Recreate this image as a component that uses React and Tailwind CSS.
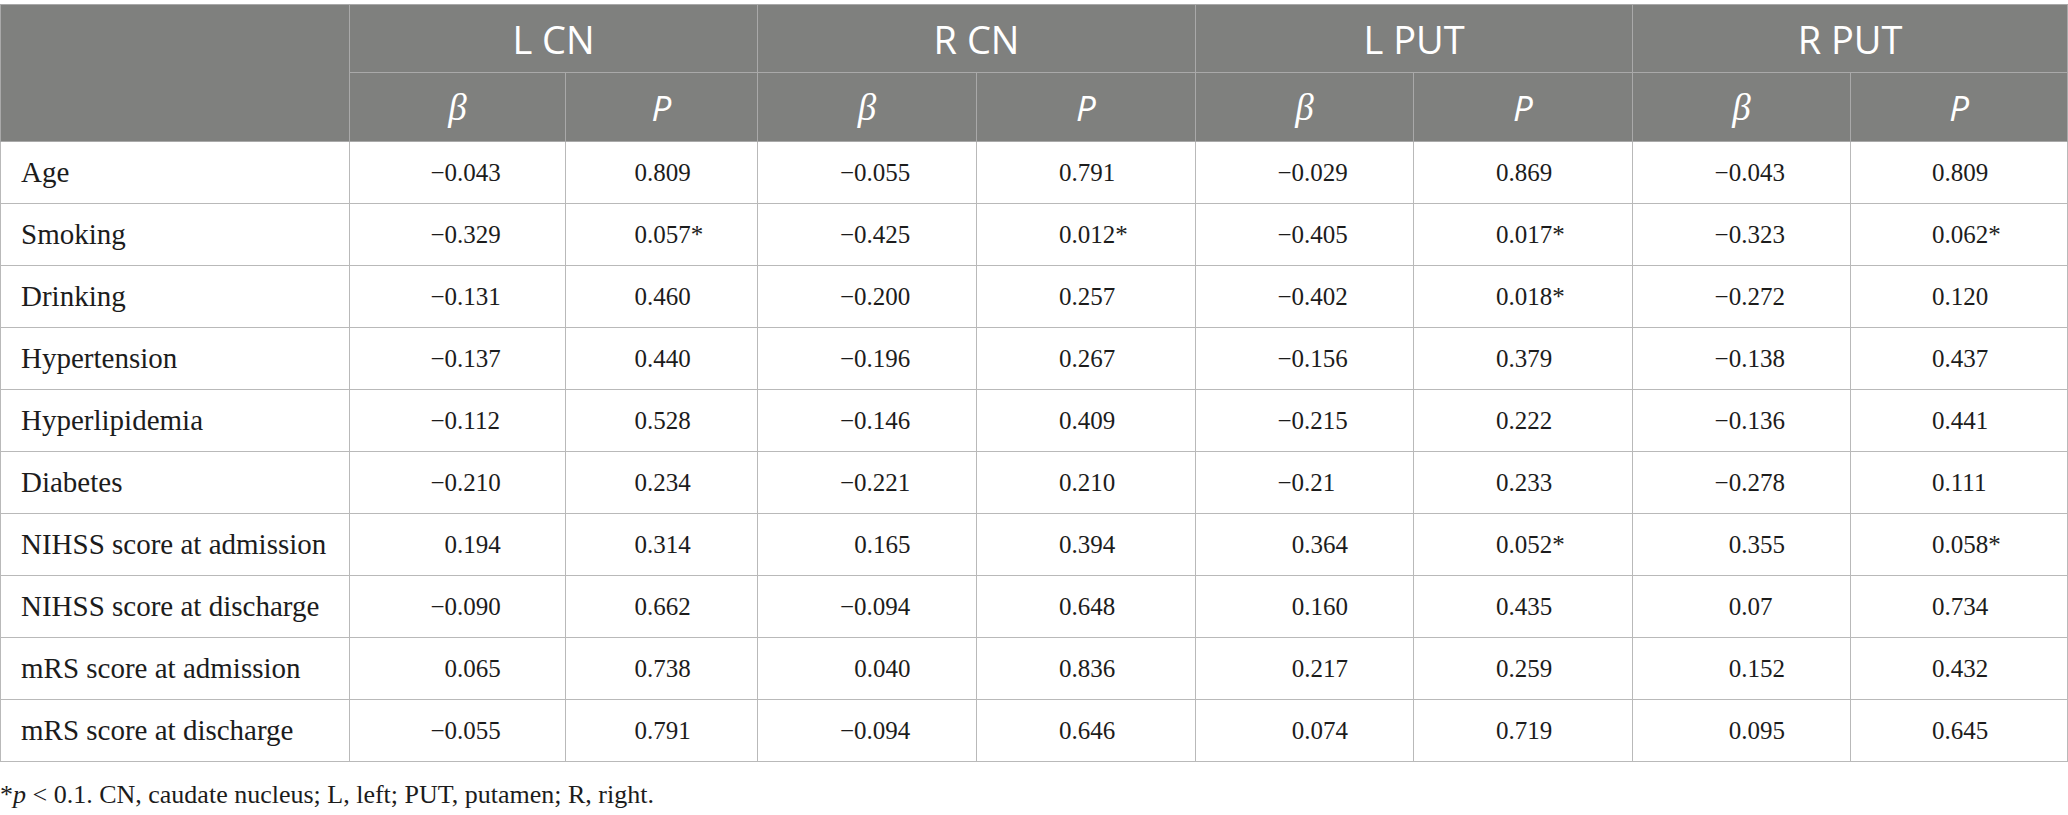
import React from "react";

const groups = ["L CN", "R CN", "L PUT", "R PUT"];
const widths = ["w-[349px]", "w-[216px]", "w-[192px]", "w-[219px]", "w-[219px]", "w-[218px]", "w-[219px]", "w-[218px]", "w-[217px]"];

const rows = [
  ["Age", "−0.043", "0.809", "−0.055", "0.791", "−0.029", "0.869", "−0.043", "0.809"],
  ["Smoking", "−0.329", "0.057*", "−0.425", "0.012*", "−0.405", "0.017*", "−0.323", "0.062*"],
  ["Drinking", "−0.131", "0.460", "−0.200", "0.257", "−0.402", "0.018*", "−0.272", "0.120"],
  ["Hypertension", "−0.137", "0.440", "−0.196", "0.267", "−0.156", "0.379", "−0.138", "0.437"],
  ["Hyperlipidemia", "−0.112", "0.528", "−0.146", "0.409", "−0.215", "0.222", "−0.136", "0.441"],
  ["Diabetes", "−0.210", "0.234", "−0.221", "0.210", "−0.21", "0.233", "−0.278", "0.111"],
  ["NIHSS score at admission", "0.194", "0.314", "0.165", "0.394", "0.364", "0.052*", "0.355", "0.058*"],
  ["NIHSS score at discharge", "−0.090", "0.662", "−0.094", "0.648", "0.160", "0.435", "0.07", "0.734"],
  ["mRS score at admission", "0.065", "0.738", "0.040", "0.836", "0.217", "0.259", "0.152", "0.432"],
  ["mRS score at discharge", "−0.055", "0.791", "−0.094", "0.646", "0.074", "0.719", "0.095", "0.645"],
];

// beta values line up on the decimal point, so positives get a hidden minus
function Beta({ v }) {
  const neg = v.startsWith("−");
  return (
    <span className="inline-block w-[54px] text-left whitespace-nowrap">
      {!neg && <span className="invisible">−</span>}
      {v}
    </span>
  );
}

function PVal({ v }) {
  return <span className="inline-block w-[54px] text-left whitespace-nowrap">{v}</span>;
}

export default function App() {
  return (
    <div className="w-[2068px] bg-white pt-[4px] font-['Liberation_Serif',serif] text-[#1c1c1c]">
      <table className="w-[2067px] table-fixed border-collapse">
        <colgroup>
          {widths.map((w, i) => (
            <col key={i} className={w} />
          ))}
        </colgroup>
        <thead className="bg-[#7f807e] text-white font-['Open_Sans',sans-serif]">
          <tr className="h-[68px]">
            <th rowSpan={2} className="border border-[#a9a9a9]"></th>
            {groups.map((g) => (
              <th key={g} colSpan={2} className="border border-[#a9a9a9] text-[38px] font-normal leading-none">
                {g}
              </th>
            ))}
          </tr>
          <tr className="h-[69px]">
            {groups.map((g) => (
              <React.Fragment key={g}>
                <th className="border border-[#a9a9a9] font-['Liberation_Serif',serif] text-[37px] font-normal italic leading-none">
                  β
                </th>
                <th className="border border-[#a9a9a9] text-[35px] font-normal italic leading-none">P</th>
              </React.Fragment>
            ))}
          </tr>
        </thead>
        <tbody className="text-[25px] leading-none">
          {rows.map((r) => (
            <tr key={r[0]} className="h-[62px]">
              <td className="border border-[#b9b9b9] pl-[20px] text-left text-[29px]">{r[0]}</td>
              {r.slice(1).map((v, i) => (
                <td key={i} className="border border-[#b9b9b9] text-center">
                  {i % 2 === 0 ? <Beta v={v} /> : <PVal v={v} />}
                </td>
              ))}
            </tr>
          ))}
        </tbody>
      </table>
      <p className="mt-[20px] text-[26px] leading-none">
        *<i>p</i> &lt; 0.1. CN, caudate nucleus; L, left; PUT, putamen; R, right.
      </p>
    </div>
  );
}
